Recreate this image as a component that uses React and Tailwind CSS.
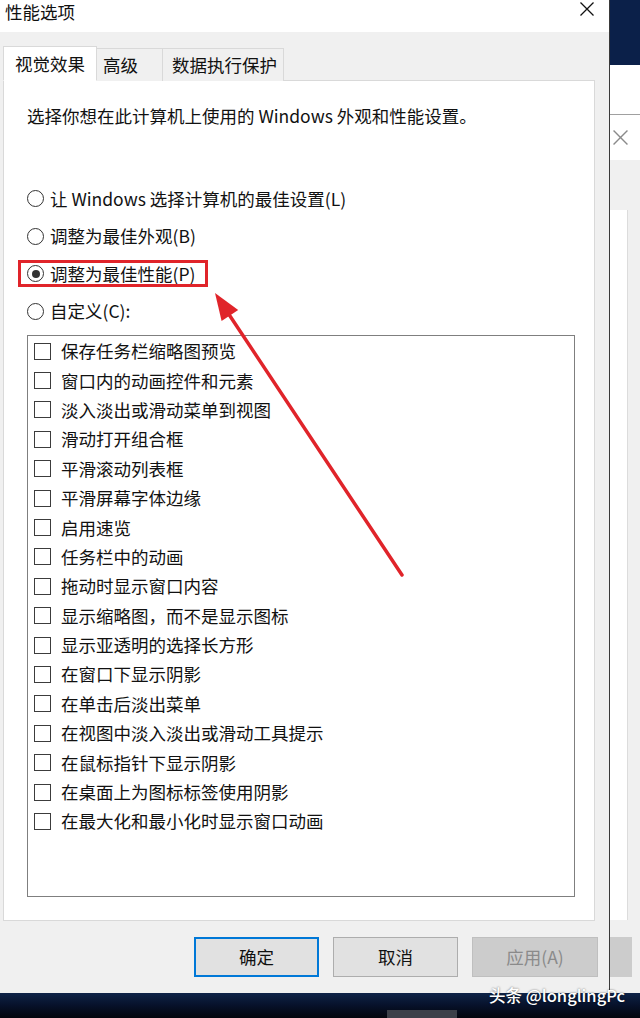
import React from "react";

const OPTIONS = [
  { label: "让 Windows 选择计算机的最佳设置(L)", checked: false },
  { label: "调整为最佳外观(B)", checked: false },
  { label: "调整为最佳性能(P)", checked: true },
  { label: "自定义(C):", checked: false },
];

const EFFECTS = [
  "保存任务栏缩略图预览",
  "窗口内的动画控件和元素",
  "淡入淡出或滑动菜单到视图",
  "滑动打开组合框",
  "平滑滚动列表框",
  "平滑屏幕字体边缘",
  "启用速览",
  "任务栏中的动画",
  "拖动时显示窗口内容",
  "显示缩略图，而不是显示图标",
  "显示亚透明的选择长方形",
  "在窗口下显示阴影",
  "在单击后淡出菜单",
  "在视图中淡入淡出或滑动工具提示",
  "在鼠标指针下显示阴影",
  "在桌面上为图标标签使用阴影",
  "在最大化和最小化时显示窗口动画",
];

function Radio({ label, checked }) {
  return (
    <div className="h-[37.5px] flex items-center pl-[23px]">
      <span className="w-[17px] h-[17px] rounded-full border-[1.5px] border-[#333] bg-white flex items-center justify-center shrink-0">
        {checked && <span className="w-[8px] h-[8px] rounded-full bg-[#333]" />}
      </span>
      <span className="ml-[6px] leading-[24px]">{label}</span>
    </div>
  );
}

function EffectRow({ label }) {
  return (
    <div className="h-[29.4px] flex items-center pl-[6px]">
      <span className="w-[17px] h-[17px] border-[1.5px] border-[#3c3c3c] bg-white shrink-0" />
      <span className="ml-[10px] leading-[24px] whitespace-nowrap">{label}</span>
    </div>
  );
}

function CloseIcon({ className, color }) {
  return (
    <svg className={className} viewBox="0 0 14 14" fill="none" stroke={color} strokeWidth="1.3">
      <path d="M0.5 0.5L13.5 13.5M13.5 0.5L0.5 13.5" />
    </svg>
  );
}

function Dialog() {
  return (
    <div className="w-[609px] flex flex-col bg-[#f0f0f0]">
      {/* title bar */}
      <div className="h-[32px] bg-white flex justify-between items-start pl-[5px] pr-[15px]">
        <span className="text-[17.5px] leading-[23px]">性能选项</span>
        <CloseIcon className="w-[14px] h-[14px] mt-[2px]" color="#111" />
      </div>

      <div className="pt-[14px] pl-[3px] pr-[14px]">
        {/* tabs */}
        <div className="flex items-end h-[35px] -mb-px">
          <div className="relative z-10 w-[94px] h-[35px] bg-white border border-[#d9d9d9] border-b-white flex items-center justify-center pt-[2px] text-[17.5px]">
            视觉效果
          </div>
          <div className="w-[66px] h-[33px] bg-[#f0f0f0] border-t border-r border-[#d9d9d9] flex items-center pl-[6px] pt-[1px] text-[17.5px]">
            高级
          </div>
          <div className="w-[121px] h-[33px] bg-[#f0f0f0] border-t border-r border-[#d9d9d9] flex items-center pl-[9px] pt-[1px] text-[17.5px]">
            数据执行保护
          </div>
        </div>

        {/* tab panel */}
        <div className="h-[841px] bg-white border border-[#d9d9d9] pt-[23px] text-[17.5px]">
          <p className="h-[24px] leading-[24px] pl-[23px] whitespace-nowrap">
            选择你想在此计算机上使用的 Windows 外观和性能设置。
          </p>
          <div className="mt-[52px]">
            {OPTIONS.map((o) => (
              <Radio key={o.label} label={o.label} checked={o.checked} />
            ))}
          </div>
          <div className="mt-[4.5px] ml-[23px] w-[548px] h-[562px] border border-[#7f7f7f] pt-[1px]">
            {EFFECTS.map((e) => (
              <EffectRow key={e} label={e} />
            ))}
          </div>
        </div>
      </div>

      {/* buttons */}
      <div className="mt-[16px] flex justify-end gap-[14px] pr-[11px] text-[17.5px]">
        <button className="w-[125px] h-[40px] bg-[#e1e1e1] border-2 border-[#0078d7]">确定</button>
        <button className="w-[125px] h-[40px] bg-[#e1e1e1] border border-[#adadad]">取消</button>
        <button className="w-[126px] h-[40px] bg-[#cccccc] border border-[#bfbfbf] text-[#8a8a8a]">应用(A)</button>
      </div>
    </div>
  );
}

function RightStrip() {
  return (
    <div className="w-[31px] border-l border-[#3a3a3a] flex flex-col bg-[#f0f0f0]">
      <div className="h-[65px] bg-[#0b2049]" />
      <div className="h-[50px] bg-white border-b border-[#a0a0a0]" />
      <div className="h-[45px] bg-white flex items-center pl-[3px]">
        <CloseIcon className="w-[15px] h-[15px]" color="#8a8a8a" />
      </div>
      <div className="h-[50px]" />
      <div className="h-[710px] w-[18px] bg-white border-r border-[#dcdcdc]" />
      <div className="h-[17px]" />
      <div className="h-[40px] w-[22px] bg-[#cccccc]" />
    </div>
  );
}

export default function App() {
  return (
    <div className="relative w-[640px] h-[1018px] overflow-hidden flex flex-col bg-[#f0f0f0] text-[#111] font-['Noto_Sans_CJK_SC',sans-serif]">
      <div className="flex h-[993px]">
        <Dialog />
        <RightStrip />
      </div>

      {/* taskbar */}
      <div className="h-[25px] bg-gradient-to-b from-[#0f2448] via-[#07112a] to-[#03060d] pl-[387px] pt-[17px]">
        <div className="w-[70px] h-[8px] bg-[#3c4049]" />
      </div>

      {/* annotation: red box */}
      <div className="absolute left-[18px] top-[260px] w-[190px] h-[27px] border-[3px] border-[#e0242a]" />

      {/* annotation: arrow */}
      <svg className="absolute left-0 top-0 w-[640px] h-[1018px] pointer-events-none" viewBox="0 0 640 1018">
        <line x1="402" y1="575" x2="228" y2="313" stroke="#e0242a" strokeWidth="3.5" strokeLinecap="round" />
        <polygon points="215,293 221.6,321 238.2,310" fill="#e0242a" />
      </svg>

      {/* watermark */}
      <div className="absolute right-[15px] top-[984px] h-[22px] leading-[22px] text-[16.5px] font-medium text-white [text-shadow:0_0_2px_rgba(0,0,0,0.6)] whitespace-nowrap">
        头条 @longlingPc
      </div>
    </div>
  );
}
